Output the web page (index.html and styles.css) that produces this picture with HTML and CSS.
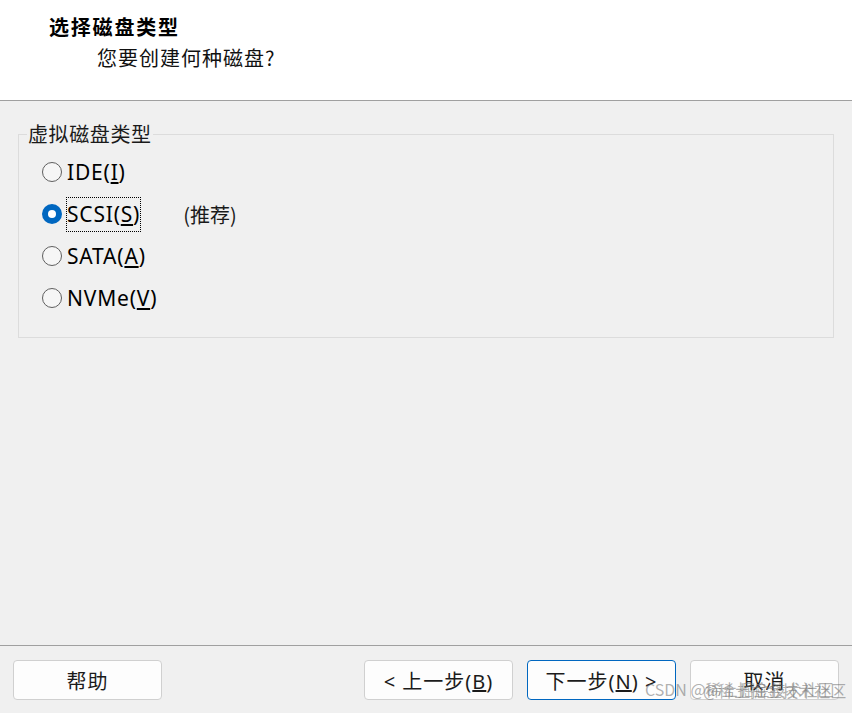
FILE: index.html
```html
<!DOCTYPE html>
<html lang="zh-CN">
<head>
<meta charset="utf-8">
<title>选择磁盘类型</title>
<link rel="stylesheet" href="styles.css">
</head>
<body>
<div class="dialog">
  <header class="header">
    <div class="title">选择磁盘类型</div>
    <div class="subtitle">您要创建何种磁盘?</div>
  </header>
  <main class="main">
    <fieldset class="group">
      <legend class="legend">虚拟磁盘类型</legend>
      <div class="row"><span class="radio"></span><span class="label">IDE(<u>I</u>)</span></div>
      <div class="row"><span class="radio checked"></span><span class="label focus">SCSI(<u>S</u>)</span><span class="hint">(推荐)</span></div>
      <div class="row"><span class="radio"></span><span class="label">SATA(<u>A</u>)</span></div>
      <div class="row"><span class="radio"></span><span class="label">NVMe(<u>V</u>)</span></div>
    </fieldset>
  </main>
  <footer class="footer">
    <button class="btn">帮助</button>
    <button class="btn btn-back">&lt; 上一步(<u>B</u>)</button>
    <button class="btn btn-default">下一步(<u>N</u>) &gt;</button>
    <button class="btn">取消</button>
    <div class="watermark"><span class="wm1">CSDN @稀土掘金技术社区</span><span class="wm2">@稀土掘金技术社区</span></div>
  </footer>
</div>
</body>
</html>
```

FILE: styles.css
```css
* { box-sizing: border-box; }
html, body { margin: 0; padding: 0; }
body {
  width: 852px;
  height: 713px;
  overflow: hidden;
  background: #f0f0f0;
  font-family: "Noto Sans", "Noto Sans CJK SC", sans-serif;
  color: #000;
}
.dialog {
  width: 852px;
  height: 713px;
  display: flex;
  flex-direction: column;
}
.header {
  height: 101px;
  background: #fff;
  border-bottom: 1px solid #a0a0a0;
  padding: 14px 0 0 49px;
}
.title {
  font-family: "Noto Sans CJK SC", sans-serif;
  font-weight: 700;
  font-size: 20px;
  line-height: 26px;
  letter-spacing: 1.8px;
}
.subtitle {
  font-family: "Noto Sans CJK SC", sans-serif;
  font-size: 20px;
  line-height: 26px;
  letter-spacing: 1px;
  margin: 5px 0 0 48px;
  color: #111;
}
.main {
  flex: 1;
  padding: 21px 18px 0 18px;
}
.group {
  margin: 0;
  height: 216px;
  border: 1px solid #dcdcdc;
  padding: 5px 0 0 23px;
  min-width: 0;
}
.legend {
  font-family: "Noto Sans CJK SC", sans-serif;
  font-size: 20px;
  line-height: 24px;
  padding: 0 1px;
  margin-left: -15px;
  letter-spacing: 0.6px;
  color: #1a1a1a;
}
.row {
  height: 42px;
  display: flex;
  align-items: center;
  font-size: 21px;
}
.radio {
  width: 20px;
  height: 20px;
  border-radius: 50%;
  border: 1px solid #5f5f5f;
  background: #f6f6f6;
  margin-right: 5px;
  flex: none;
  position: relative;
}
.radio.checked {
  border: none;
  background: #0067c0;
}
.radio.checked::after {
  content: "";
  position: absolute;
  left: 6px;
  top: 6px;
  width: 8px;
  height: 8px;
  border-radius: 50%;
  background: #fff;
}
.label {
  line-height: 33px;
  border: 1px solid transparent;
  margin-left: -1px;
  padding-right: 0;
  letter-spacing: 0.8px;
}
.label.focus {
  border: 1px dotted #000;
}
.hint {
  margin-left: 42px;
  font-family: "Noto Sans CJK SC", sans-serif;
  font-size: 20px;
  color: #1a1a1a;
}
.footer {
  height: 68px;
  border-top: 1px solid #a0a0a0;
  display: flex;
  gap: 14px;
  padding: 14px 13px 0 13px;
  position: relative;
}
.btn {
  width: 149px;
  height: 40px;
  background: #fdfdfd;
  border: 1px solid #d0d0d0;
  border-radius: 4px;
  font-family: "Noto Sans", "Noto Sans CJK SC", sans-serif;
  font-size: 20px;
  letter-spacing: 1px;
  color: #1b1b1b;
  padding: 0;
}
.btn-back { margin-left: auto; }
.btn-default { border-color: #0067c0; }
.watermark {
  position: absolute;
  left: 645px;
  top: 33px;
  font-family: "Noto Sans CJK SC", sans-serif;
  font-size: 16px;
  line-height: 20px;
  color: rgba(110, 110, 110, 0.55);
  white-space: nowrap;
  pointer-events: none;
}
.wm1 { position: absolute; left: 0; top: 0; }
.wm2 { position: absolute; left: 58px; top: 1px; }
```
